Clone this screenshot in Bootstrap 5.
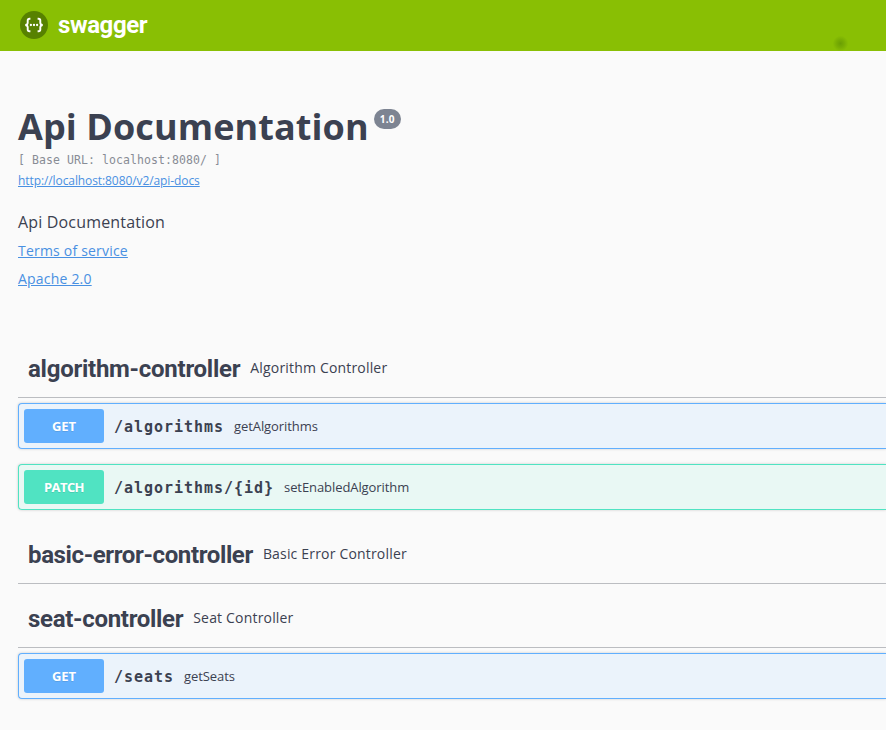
<!DOCTYPE html>
<html lang="en">
<head>
<meta charset="utf-8">
<meta name="viewport" content="width=device-width, initial-scale=1">
<title>Swagger UI</title>
<link rel="stylesheet" href="https://cdn.jsdelivr.net/npm/bootstrap@5.3.0/dist/css/bootstrap.min.css">
<style>
body{background:#fafafa;color:#3b4151;font-family:"Open Sans","Noto Sans",sans-serif;min-height:730px;overflow:hidden}
.topbar{height:51px;background:#89bf04;padding:0 20px 2px}
.topbar-link{gap:10px}
.brand-name{font:700 24px/30px Roboto,sans-serif;letter-spacing:-.4px}
.cursor-spot{left:832px;top:35px;width:17px;height:17px;background:radial-gradient(circle,rgba(60,110,0,.4),rgba(60,110,0,.2) 35%,transparent 65%)}
.wrapper{padding-left:18px}
.info{padding-top:51px;height:291px}
.info-title{font-size:36px;line-height:50px;letter-spacing:.08px}
.version{background:#7d8492;font-size:10px;line-height:12px;padding:4px 6px;border-radius:57px;margin:7px 0 0 5px;height:20px;letter-spacing:.3px}
.mono{font-family:"DejaVu Sans Mono",monospace}
.base-url{font-size:11.5px;line-height:16px;letter-spacing:.08px;color:#888c95;white-space:pre}
.info a{color:#4990e2}
.spec-link{font-size:12px;line-height:18px;margin-top:4px;letter-spacing:-.09px}
.description{font-size:16px;line-height:22px;margin-top:21px;letter-spacing:.17px}
.info-link{font-size:14px;line-height:20px;margin-top:8px;letter-spacing:.2px}
.tag-head{height:56px;padding-left:10px;border-bottom:1px solid #bbbdc1;gap:10px}
.tag-name{font:700 24px/30px Roboto,sans-serif;letter-spacing:-.3px;padding-bottom:2px}
.t-alg{letter-spacing:-.26px}
.t-basic{letter-spacing:-.37px}
.tag-desc{font-size:14px;line-height:20px;padding-bottom:3px;letter-spacing:.18px}
.opblock{height:46px;border:1px solid;border-right:0;border-radius:4px 0 0 4px;padding-left:5px;box-shadow:0 0 3px rgba(0,0,0,.19)}
.op-get{border-color:#61affe;background:#ebf3fb}
.op-patch{border-color:#50e3c2;background:#e9f8f4}
.method{width:80px;height:34px;border-radius:3px;font:700 13px/35px "Open Sans",sans-serif;text-shadow:0 1px 0 rgba(0,0,0,.1)}
.op-get .method{background:#61affe}
.op-patch .method{background:#50e3c2;letter-spacing:-.6px}
.op-path{font-size:15px;font-weight:700;letter-spacing:.97px;margin-left:10px;padding-top:2px}
.op-desc{font-size:13px;letter-spacing:-.08px;margin-left:10px;padding-top:1px}
</style>
<script src="https://cdn.jsdelivr.net/npm/bootstrap@5.3.0/dist/js/bootstrap.bundle.min.js" defer></script>
</head>
<body>
<header class="topbar d-flex align-items-center position-relative">
  <a class="topbar-link d-flex align-items-center text-white text-decoration-none" href="#">
    <svg width="28" height="28" viewBox="0 0 28 28" aria-hidden="true"><circle cx="14" cy="14" r="14" fill="#578100"/><g fill="none" stroke="#fff" stroke-width="1.9"><path d="M10.4 7.8H9.5Q7.7 7.8 7.7 9.6V11.7Q7.7 13.8 5.3 14Q7.7 14.2 7.7 16.3V18.4Q7.7 20.2 9.5 20.2H10.4"/><path d="M17.6 7.8H18.5Q20.3 7.8 20.3 9.6V11.7Q20.3 13.8 22.7 14Q20.3 14.2 20.3 16.3V18.4Q20.3 20.2 18.5 20.2H17.6"/></g><g fill="#fff"><circle cx="10.9" cy="14" r="1.15"/><circle cx="14" cy="14" r="1.15"/><circle cx="17.1" cy="14" r="1.15"/></g></svg>
    <span class="brand-name">swagger</span>
  </a>
  <span class="cursor-spot position-absolute"></span>
</header>
<main class="wrapper">
  <section class="info">
    <div class="d-flex align-items-start"><h1 class="info-title fw-bold m-0">Api Documentation</h1><span class="version text-white fw-bold">1.0</span></div>
    <div class="base-url mono">[ Base URL: localhost:8080/ ]</div>
    <div class="spec-link"><a href="#">http://localhost:8080/v2/api-docs</a></div>
    <p class="description mb-0">Api Documentation</p>
    <div class="info-link"><a href="#">Terms of service</a></div>
    <div class="info-link"><a href="#">Apache 2.0</a></div>
  </section>
  <section>
    <div class="tag-head d-flex align-items-center"><h2 class="tag-name t-alg m-0">algorithm-controller</h2><span class="tag-desc">Algorithm Controller</span></div>
    <div class="opblock op-get d-flex align-items-center" style="margin-top:5px"><span class="method text-white text-center">GET</span><span class="op-path mono">/algorithms</span><span class="op-desc">getAlgorithms</span></div>
    <div class="opblock op-patch d-flex align-items-center" style="margin-top:15px"><span class="method text-white text-center">PATCH</span><span class="op-path mono">/algorithms/{id}</span><span class="op-desc">setEnabledAlgorithm</span></div>
  </section>
  <section style="margin-top:18px">
    <div class="tag-head d-flex align-items-center"><h2 class="tag-name t-basic m-0">basic-error-controller</h2><span class="tag-desc">Basic Error Controller</span></div>
  </section>
  <section style="margin-top:8px">
    <div class="tag-head d-flex align-items-center"><h2 class="tag-name t-seat m-0">seat-controller</h2><span class="tag-desc">Seat Controller</span></div>
    <div class="opblock op-get d-flex align-items-center" style="margin-top:5px"><span class="method text-white text-center">GET</span><span class="op-path mono">/seats</span><span class="op-desc">getSeats</span></div>
  </section>
</main>
</body>
</html>
